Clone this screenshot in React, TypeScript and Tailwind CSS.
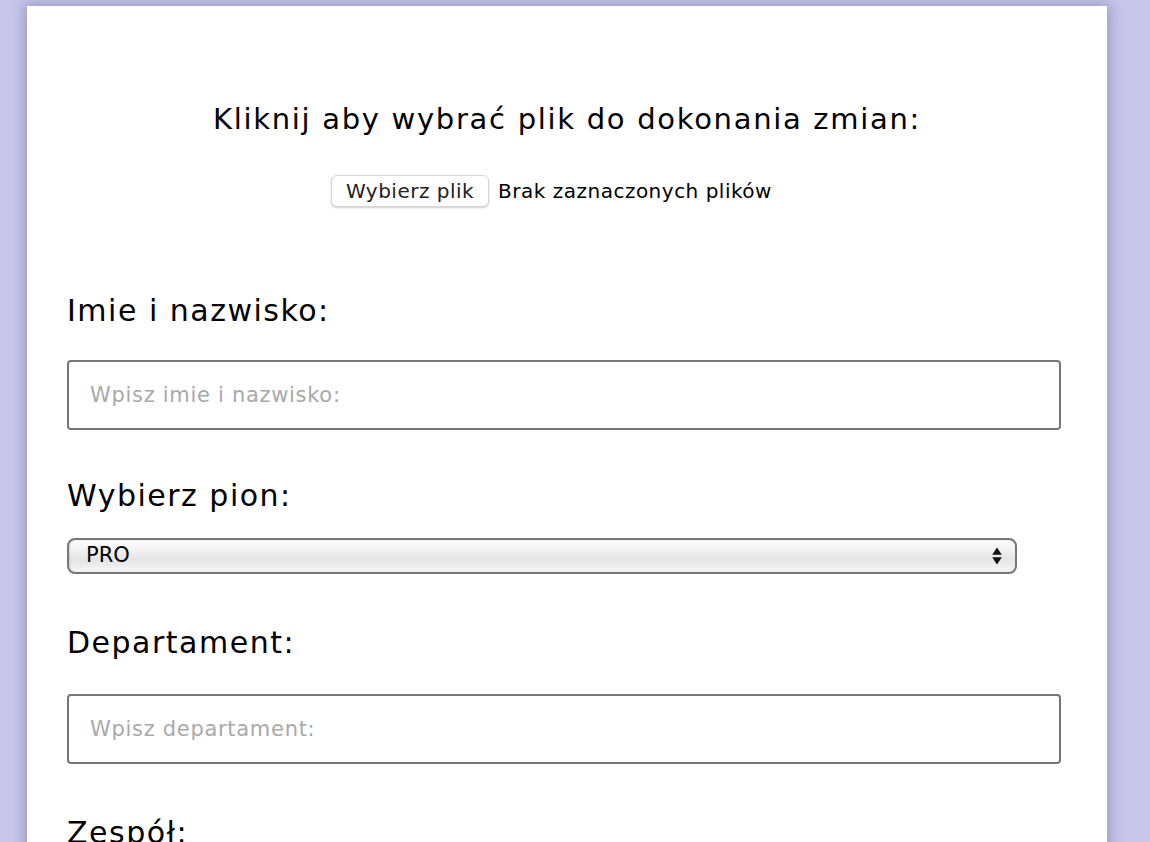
export default function App() {
  return (
    <div className="min-h-[842px] w-full bg-[#c8c6ea] pt-[6px]">
      <div className="ml-[27px] min-h-[836px] w-[1080px] bg-white px-[40px] pt-[93px] shadow-[0_0_14px_2px_rgba(60,55,110,0.35)]">
        <h1 className="text-center font-['DejaVu_Sans',Verdana,sans-serif] text-[29px] leading-[40px] tracking-[1.7px] text-black">
          Kliknij aby wybrać plik do dokonania zmian:
        </h1>

        <div className="mt-[36px] flex items-center justify-center pr-[31px] font-['DejaVu_Sans',Verdana,sans-serif] text-[20px] tracking-[0.5px] text-black">
          <button
            type="button"
            className="h-[32px] w-[158px] rounded-[6px] border border-[#d6d6d6] bg-white text-[#222] shadow-[0_1px_2px_rgba(0,0,0,0.2)]"
          >
            Wybierz plik
          </button>
          <span className="ml-[9px]">Brak zaznaczonych plików</span>
        </div>

        <form className="mt-[84px] font-['DejaVu_Sans',Verdana,sans-serif] text-black">
          <label htmlFor="name" className="block text-[30px] leading-[40px] tracking-[1.5px]">
            Imie i nazwisko:
          </label>
          <input
            id="name"
            type="text"
            placeholder="Wpisz imie i nazwisko:"
            className="mt-[29px] block h-[70px] w-[994px] rounded-[4px] border-2 border-[#767676] bg-white px-[21px] font-['DejaVu_Sans',Verdana,sans-serif] text-[21px] tracking-[0.7px] outline-none placeholder:text-[#a9a9a9]"
          />

          <label htmlFor="pion" className="mt-[46px] block text-[30px] leading-[40px] tracking-[1.5px]">
            Wybierz pion:
          </label>
          <div className="relative mt-[22px] w-[950px]">
            <select
              id="pion"
              className="block h-[36px] w-full appearance-none rounded-[8px] border-2 border-[#777] bg-[linear-gradient(#fdfdfd,#ececec_45%,#e4e4e4_60%,#f6f6f6)] pl-[17px] font-['DejaVu_Sans',Verdana,sans-serif] text-[21px] text-black shadow-[inset_1px_0_2px_rgba(0,0,0,0.12)]"
              defaultValue="PRO"
            >
              <option>PRO</option>
            </select>
            <svg
              className="pointer-events-none absolute right-[15px] top-[9px]"
              width="10"
              height="18"
              viewBox="0 0 10 18"
              aria-hidden="true"
            >
              <path d="M5 0.5 L9.8 7.8 L0.2 7.8 Z" fill="#111" />
              <path d="M5 17.5 L9.8 10.2 L0.2 10.2 Z" fill="#111" />
            </svg>
          </div>

          <label htmlFor="dep" className="mt-[49px] block text-[30px] leading-[40px] tracking-[1.5px]">
            Departament:
          </label>
          <input
            id="dep"
            type="text"
            placeholder="Wpisz departament:"
            className="mt-[31px] block h-[70px] w-[994px] rounded-[4px] border-2 border-[#767676] bg-white px-[21px] font-['DejaVu_Sans',Verdana,sans-serif] text-[21px] tracking-[0.7px] outline-none placeholder:text-[#a9a9a9]"
          />

          <label htmlFor="team" className="mt-[49px] block text-[30px] leading-[40px] tracking-[1.5px]">
            Zespół:
          </label>
        </form>
      </div>
    </div>
  );
}
